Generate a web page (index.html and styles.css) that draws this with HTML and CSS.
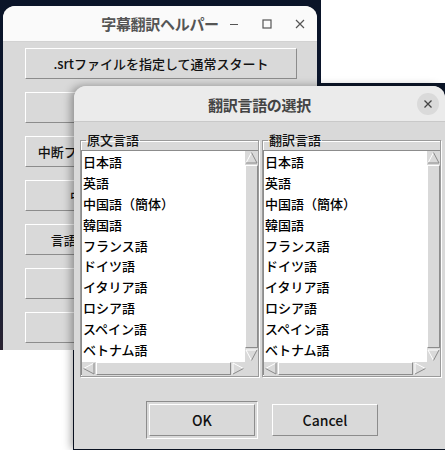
FILE: index.html
```html
<!DOCTYPE html>
<html lang="ja">
<head>
<meta charset="utf-8">
<title>字幕翻訳ヘルパー</title>
<link rel="stylesheet" href="styles.css">
</head>
<body>
<div class="screen">
  <div class="desk desk-main"></div>
  <div class="desk desk-dialog"></div>

  <div class="win main-win">
    <div class="titlebar">
      <span></span>
      <span class="title">字幕翻訳ヘルパー</span>
      <div class="controls">
        <span class="ctl"><svg width="10" height="10" viewBox="0 0 10 10"><path d="M1 5.5h8" stroke="#555" stroke-width="1.2"/></svg></span>
        <span class="ctl"><svg width="10" height="10" viewBox="0 0 10 10"><rect x="1" y="1" width="8" height="8" fill="none" stroke="#555" stroke-width="1.2"/></svg></span>
        <span class="ctl"><svg width="10" height="10" viewBox="0 0 10 10"><path d="M1 1l8 8M9 1l-8 8" stroke="#555" stroke-width="1.2"/></svg></span>
      </div>
    </div>
    <div class="main-body">
      <button class="tk-btn wide">.srtファイルを指定して通常スタート</button>
      <button class="tk-btn wide"></button>
      <button class="tk-btn wide">中断ファイルを指定して途中からスタート</button>
      <button class="tk-btn wide">中間ファイルから字幕を再生成</button>
      <button class="tk-btn wide">言語設定を変更してから通常スタート</button>
      <button class="tk-btn wide"></button>
      <button class="tk-btn wide"></button>
    </div>
  </div>

  <div class="win dialog">
    <div class="dtitlebar">
      <span class="dtitle">翻訳言語の選択</span>
      <span class="close"><svg width="10" height="10" viewBox="0 0 10 10"><path d="M1.5 1.5l7 7M8.5 1.5l-7 7" stroke="#444" stroke-width="1.3"/></svg></span>
    </div>
    <div class="dbody">
      <div class="frames">
        <fieldset class="lf">
          <legend>原文言語</legend>
          <div class="lbox">
            <ul class="list">
              <li>日本語</li><li>英語</li><li>中国語（簡体）</li><li>韓国語</li><li>フランス語</li>
              <li>ドイツ語</li><li>イタリア語</li><li>ロシア語</li><li>スペイン語</li><li>ベトナム語</li>
            </ul>
            <div class="vscroll">
              <svg class="arrow" width="13" height="13" viewBox="0 0 13 13"><path d="M1 12L6.5 1.5 12 12z" fill="#d9d9d9"/><path d="M1 12L6.5 1.5" stroke="#fff" fill="none"/><path d="M6.5 1.5L12 12H1" stroke="#8a8a8a" fill="none"/></svg>
              <div class="vslider"></div>
              <svg class="arrow" width="13" height="13" viewBox="0 0 13 13"><path d="M1 1L6.5 11.5 12 1z" fill="#d9d9d9"/><path d="M12 1H1L6.5 11.5" stroke="#fff" fill="none"/><path d="M6.5 11.5L12 1" stroke="#8a8a8a" fill="none"/></svg>
            </div>
            <div class="hscroll">
              <svg class="arrow" width="13" height="13" viewBox="0 0 13 13"><path d="M12 1L1.5 6.5 12 12z" fill="#d9d9d9"/><path d="M12 1L1.5 6.5" stroke="#fff" fill="none"/><path d="M1.5 6.5L12 12V1" stroke="#8a8a8a" fill="none"/></svg>
              <div class="hslider"></div>
              <svg class="arrow" width="13" height="13" viewBox="0 0 13 13"><path d="M1 1L11.5 6.5 1 12z" fill="#d9d9d9"/><path d="M1 12V1L11.5 6.5" stroke="#fff" fill="none"/><path d="M11.5 6.5L1 12" stroke="#8a8a8a" fill="none"/></svg>
            </div>
            <div class="corner"></div>
          </div>
        </fieldset>
        <fieldset class="lf">
          <legend>翻訳言語</legend>
          <div class="lbox">
            <ul class="list">
              <li>日本語</li><li>英語</li><li>中国語（簡体）</li><li>韓国語</li><li>フランス語</li>
              <li>ドイツ語</li><li>イタリア語</li><li>ロシア語</li><li>スペイン語</li><li>ベトナム語</li>
            </ul>
            <div class="vscroll">
              <svg class="arrow" width="13" height="13" viewBox="0 0 13 13"><path d="M1 12L6.5 1.5 12 12z" fill="#d9d9d9"/><path d="M1 12L6.5 1.5" stroke="#fff" fill="none"/><path d="M6.5 1.5L12 12H1" stroke="#8a8a8a" fill="none"/></svg>
              <div class="vslider"></div>
              <svg class="arrow" width="13" height="13" viewBox="0 0 13 13"><path d="M1 1L6.5 11.5 12 1z" fill="#d9d9d9"/><path d="M12 1H1L6.5 11.5" stroke="#fff" fill="none"/><path d="M6.5 11.5L12 1" stroke="#8a8a8a" fill="none"/></svg>
            </div>
            <div class="hscroll">
              <svg class="arrow" width="13" height="13" viewBox="0 0 13 13"><path d="M12 1L1.5 6.5 12 12z" fill="#d9d9d9"/><path d="M12 1L1.5 6.5" stroke="#fff" fill="none"/><path d="M1.5 6.5L12 12V1" stroke="#8a8a8a" fill="none"/></svg>
              <div class="hslider"></div>
              <svg class="arrow" width="13" height="13" viewBox="0 0 13 13"><path d="M1 1L11.5 6.5 1 12z" fill="#d9d9d9"/><path d="M1 12V1L11.5 6.5" stroke="#fff" fill="none"/><path d="M11.5 6.5L1 12" stroke="#8a8a8a" fill="none"/></svg>
            </div>
            <div class="corner"></div>
          </div>
        </fieldset>
      </div>
      <div class="actions">
        <div class="default-ring"><button class="tk-btn act">OK</button></div>
        <button class="tk-btn act">Cancel</button>
      </div>
    </div>
  </div>
</div>
</body>
</html>
```

FILE: styles.css
```css
* { box-sizing: border-box; }
html, body { margin: 0; padding: 0; background: #fff; }
body { font-family: "Noto Sans CJK JP", "Noto Sans", sans-serif; }

.screen {
  position: relative;
  width: 445px;
  height: 450px;
  overflow: hidden;
  background: #fff;
}

.desk { position: absolute; }
.desk-main {
  left: 0; top: 0; width: 321px; height: 350px;
  background: linear-gradient(180deg, #0a1428 0%, #0d1832 60%, #1b2137 85%, #2a2230 100%);
}
.desk-dialog {
  left: 73px; top: 83px; width: 372px; height: 367px;
  background: #0c1628;
}

.win {
  position: absolute;
  overflow: hidden;
  border-radius: 12px 12px 0 0;
  background: #d9d9d9;
  display: flex;
  flex-direction: column;
}

/* main window */
.main-win { left: 3px; top: 6px; width: 314px; height: 344px; }
.titlebar {
  height: 36px;
  flex: none;
  background: #fafafa;
  border-bottom: 1px solid #d2d2d2;
  display: grid;
  grid-template-columns: 1fr auto 1fr;
  align-items: center;
}
.title {
  font-size: 15px;
  font-weight: 700;
  color: #555;
  letter-spacing: -0.3px;
}
.controls {
  display: flex;
  justify-content: flex-end;
  gap: 9px;
  padding-right: 5px;
}
.ctl {
  width: 24px; height: 24px;
  display: flex; align-items: center; justify-content: center;
}
.main-body {
  padding: 6px 20px 0 22px;
  display: flex;
  flex-direction: column;
  gap: 13px;
}

.tk-btn {
  font-family: inherit;
  font-size: 13px;
  font-weight: 500;
  color: #111;
  background: #d9d9d9;
  border: 1px solid;
  border-color: #ffffff #8c8c8c #8c8c8c #ffffff;
  padding: 0;
  margin: 0;
  white-space: nowrap;
  overflow: hidden;
  display: flex;
  align-items: center;
  justify-content: center;
}
.tk-btn.wide { height: 31px; width: 272px; flex: none; }

/* dialog */
.dialog {
  left: 74px; top: 86px; width: 371px; height: 363px;
  box-shadow: -3px 0 8px rgba(0,0,0,0.35);
}
.dtitlebar {
  height: 36px;
  flex: none;
  background: #ebebeb;
  border-bottom: 1px solid #c9c9c9;
  display: grid;
  grid-template-columns: 1fr auto 1fr;
  align-items: center;
}
.dtitle {
  grid-column: 2;
  font-size: 15px;
  font-weight: 700;
  color: #444;
  letter-spacing: -0.3px;
  padding-top: 1px;
}
.close {
  grid-column: 3;
  justify-self: end;
  margin-right: 6px;
  width: 22px; height: 22px;
  border-radius: 50%;
  background: #dadada;
  display: flex; align-items: center; justify-content: center;
}

.dbody {
  padding: 8px 4px 0 6px;
  display: flex;
  flex-direction: column;
}
.frames {
  display: flex;
  gap: 3px;
}
.lf {
  margin: 0;
  width: 179px;
  padding: 0 0 1px 0;
  border: 1px solid #9a9a9a;
  box-shadow: inset 1px 1px 0 #fff, 1px 1px 0 #fff;
  min-width: 0;
}
.lf legend {
  font-size: 13px;
  font-weight: 500;
  line-height: 20px;
  color: #111;
  padding: 0 1px;
  margin-left: 5px;
}
.lbox {
  display: grid;
  grid-template-columns: 1fr 13px;
  grid-template-rows: 212px 13px;
}
.list {
  margin: 0;
  padding: 1px 0 0 1px;
  list-style: none;
  background: #fff;
  border-top: 1px solid #8c8c8c;
  border-left: 1px solid #8c8c8c;
  overflow: hidden;
}
.list li {
  font-size: 13px;
  font-weight: 500;
  line-height: 20.9px;
  height: 20.9px;
  color: #000;
  white-space: nowrap;
}
.vscroll {
  display: flex;
  flex-direction: column;
  background: #d9d9d9;
  border-top: 1px solid #8c8c8c;
}
.vslider {
  flex: 1;
  margin: 1px 0;
  border: 1px solid;
  border-color: #fff #8c8c8c #8c8c8c #fff;
}
.hscroll {
  display: flex;
  background: #d9d9d9;
  border-left: 1px solid #8c8c8c;
}
.hslider {
  flex: 1;
  margin: 0 1px;
  border: 1px solid;
  border-color: #fff #8c8c8c #8c8c8c #fff;
}
.arrow { flex: none; display: block; }
.corner { background: #d9d9d9; }

.actions {
  margin-top: 24px;
  display: flex;
  justify-content: center;
  align-items: center;
  gap: 14px;
  padding-left: 3px;
}
.default-ring {
  padding: 2px;
  border: 1px solid;
  border-color: #8c8c8c #fff #fff #8c8c8c;
}
.tk-btn.act {
  width: 106px;
  height: 32px;
  font-size: 14px;
  font-weight: 500;
}
```
